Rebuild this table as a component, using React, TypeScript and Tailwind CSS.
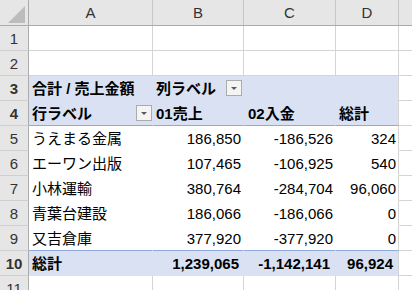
import type { ReactNode } from "react";

// Pivot data rows: customer, sales, deposits, total
const pivotRows = [
  ["うえまる金属", "186,850", "-186,526", "324"],
  ["エーワン出版", "107,465", "-106,925", "540"],
  ["小林運輸", "380,764", "-284,704", "96,060"],
  ["青葉台建設", "186,066", "-186,066", "0"],
  ["又吉倉庫", "377,920", "-377,920", "0"],
];

const colWidths = ["w-[124px]", "w-[91px]", "w-[92px]", "w-[63px]"];

function DropButton() {
  return (
    <span className="flex h-4 w-4 shrink-0 items-center justify-center border border-[#ABABAB] bg-[#F4F4F4]">
      <span className="mt-[1px] h-0 w-0 border-x-[3px] border-t-[3px] border-x-transparent border-t-[#5A5A5A]" />
    </span>
  );
}

function RowHead({ n }: { n: number }) {
  return (
    <div className="flex w-[29px] shrink-0 items-center justify-center border-r border-b border-r-[#ABABAB] border-b-[#CFCFCF] bg-[#E6E6E6] text-[#333]">
      {n}
    </div>
  );
}

function Cell({
  w,
  className = "",
  children,
}: {
  w: string;
  className?: string;
  children?: ReactNode;
}) {
  return (
    <div className={`flex shrink-0 items-center border-r border-b ${w} ${className}`}>
      {children}
    </div>
  );
}

function Tail({ className = "border-[#D4D4D4]" }: { className?: string }) {
  return <div className={`flex-1 border-b ${className}`} />;
}

function EmptyRow({ n }: { n: number }) {
  return (
    <div className="flex h-[25px]">
      <RowHead n={n} />
      {colWidths.map((w) => (
        <Cell key={w} w={w} className="border-[#D4D4D4]" />
      ))}
      <Tail />
    </div>
  );
}

export default function App() {
  const band = "bg-[#D9E1F2]";
  return (
    <div className="h-[290px] w-[412px] overflow-hidden bg-white font-['Liberation_Sans','Noto_Sans_CJK_JP',sans-serif] text-[15px] leading-none text-black">
      {/* column letters */}
      <div className="flex h-[26px] border-b border-[#ABABAB] bg-[#E6E6E6] text-[#333]">
        <div className="relative w-[29px] shrink-0 border-r border-[#ABABAB]">
          <svg className="absolute top-[6px] left-[8px]" width="18" height="18" viewBox="0 0 18 18">
            <polygon points="17,0 17,17 0,17" fill="#BCBCBC" />
          </svg>
        </div>
        {["A", "B", "C", "D"].map((l, i) => (
          <div
            key={l}
            className={`flex shrink-0 items-center justify-center border-r border-[#C6C6C6] ${colWidths[i]}`}
          >
            {l}
          </div>
        ))}
        <div className="flex-1" />
      </div>

      <EmptyRow n={1} />
      <EmptyRow n={2} />

      {/* pivot header */}
      <div className="flex h-[25px] font-bold">
        <RowHead n={3} />
        <Cell w={colWidths[0]} className={`${band} border-transparent pl-[3px]`}>
          合計 / 売上金額
        </Cell>
        <Cell w={colWidths[1]} className={`${band} justify-between border-transparent pl-[3px] pr-[1px]`}>
          列ラベル
          <DropButton />
        </Cell>
        <Cell w={colWidths[2]} className={`${band} border-transparent`} />
        <Cell w={colWidths[3]} className={`${band} border-b-transparent border-r-[#D4D4D4]`} />
        <Tail />
      </div>

      <div className="flex h-[25px] font-bold">
        <RowHead n={4} />
        <Cell w={colWidths[0]} className={`${band} justify-between border-r-transparent border-b-[#8EA9DB] pl-[3px]`}>
          行ラベル
          <DropButton />
        </Cell>
        <Cell w={colWidths[1]} className={`${band} border-r-transparent border-b-[#8EA9DB] pl-[3px]`}>
          01売上
        </Cell>
        <Cell w={colWidths[2]} className={`${band} border-r-transparent border-b-[#8EA9DB] pl-[4px]`}>
          02入金
        </Cell>
        <Cell w={colWidths[3]} className={`${band} border-r-[#D4D4D4] border-b-[#8EA9DB] pl-[3px]`}>
          総計
        </Cell>
        <Tail />
      </div>

      {pivotRows.map((r, idx) => {
        const bottom = idx === pivotRows.length - 1 ? "border-b-[#8EA9DB]" : "border-b-transparent";
        return (
          <div key={r[0]} className="flex h-[25px]">
            <RowHead n={idx + 5} />
            <Cell w={colWidths[0]} className={`border-r-transparent ${bottom} pl-[3px]`}>
              {r[0]}
            </Cell>
            <Cell w={colWidths[1]} className={`justify-end border-r-transparent ${bottom} pr-[2px]`}>
              {r[1]}
            </Cell>
            <Cell w={colWidths[2]} className={`justify-end border-r-transparent ${bottom} pr-[2px]`}>
              {r[2]}
            </Cell>
            <Cell w={colWidths[3]} className={`justify-end border-r-[#D4D4D4] ${bottom} pr-[2px]`}>
              {r[3]}
            </Cell>
            <Tail />
          </div>
        );
      })}

      {/* grand total */}
      <div className="flex h-[25px] font-bold">
        <RowHead n={10} />
        <Cell w={colWidths[0]} className={`${band} border-transparent pl-[3px]`}>
          総計
        </Cell>
        <Cell w={colWidths[1]} className={`${band} justify-end border-transparent pr-[4px]`}>
          1,239,065
        </Cell>
        <Cell w={colWidths[2]} className={`${band} justify-end border-transparent pr-[5px]`}>
          -1,142,141
        </Cell>
        <Cell w={colWidths[3]} className={`${band} justify-end border-b-transparent border-r-[#D4D4D4] pr-[5px]`}>
          96,924
        </Cell>
        <Tail />
      </div>

      <EmptyRow n={11} />
    </div>
  );
}
